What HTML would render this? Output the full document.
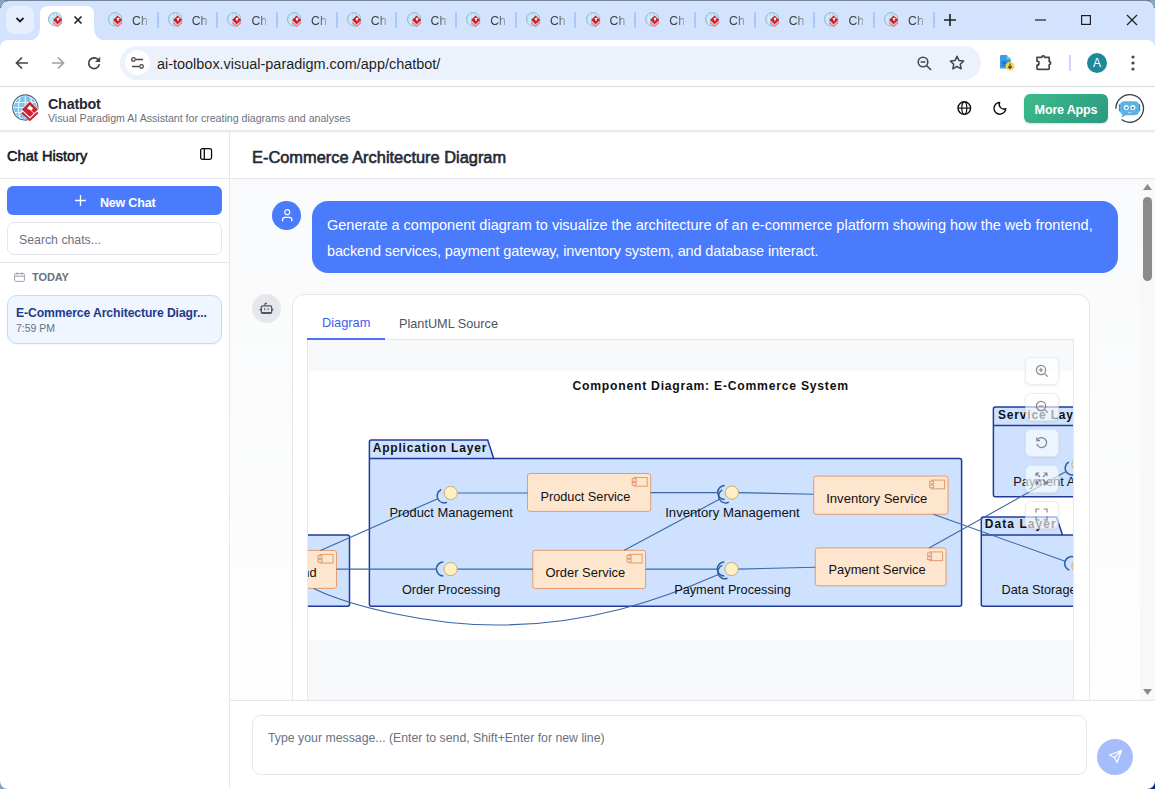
<!DOCTYPE html>
<html><head><meta charset="utf-8">
<style>
*{box-sizing:border-box;margin:0;padding:0}
html,body{width:1155px;height:789px;overflow:hidden;background:#fff;font-family:"Liberation Sans",sans-serif;position:relative}
.a{position:absolute}
svg{overflow:visible}
/* chrome */
#tabstrip{left:0;top:0;width:1155px;height:50px;background:#d3e3fd;border-top:1px solid #74869a}
#toolbar{left:0;top:40px;width:1155px;height:47px;background:#fff;border-bottom:1px solid #dadce0;border-radius:8px 8px 0 0}
.ch{font-size:12.3px;color:#3c4043;top:14px;line-height:14px;width:15px;overflow:hidden;white-space:nowrap;-webkit-mask-image:linear-gradient(90deg,#000 45%,rgba(0,0,0,.35))}
.sep{width:2px;height:16px;top:12px;background:#a8c7fa;border-radius:1px}
#url{left:120px;top:46px;width:861px;height:34px;border-radius:17px;background:#ecf2fb}
/* app */
#hdr{left:0;top:87px;width:1155px;height:44px;background:#fff;box-shadow:0 1px 2px rgba(0,0,0,.10);border-bottom:1px solid #e5e7eb;z-index:2}
#side{left:0;top:131px;width:230px;height:658px;background:#fff;border-right:1px solid #e5e7eb}
#main{left:230px;top:131px;width:925px;height:658px;background:linear-gradient(180deg,#f9fafb 0px,#f9fafb 60px,#fefefe 569px)}
.zb{width:34px;height:28px;border-radius:6px;background:rgba(255,255,255,.62);border:1px solid rgba(0,0,0,.07);box-shadow:0 1px 3px rgba(0,0,0,.08)}
</style></head><body>
<svg width="0" height="0" style="position:absolute">
 <defs>
  <symbol id="fav" viewBox="0 0 28 28">
   <circle cx="13.3" cy="13.5" r="12.4" fill="#b0e0f7" stroke="#9db4c3" stroke-width="1.8"/>
   <path d="M3 9.5h20.6M2.5 14.5h21.6M3.5 19.5h19M13.3 2.5v22M8 3.5Q5 13.5 8 23.5M18.6 3.5Q21.6 13.5 18.6 23.5" stroke="#e8f7fd" stroke-width="1.3" fill="none"/>
   <path d="M17.9 6.6l8.6 8.2-8.6 8.2-8.4-8.2z" fill="#cf1d2a"/>
   <path d="M16 12.2l3.4-2 2.4 2.6-2.2 1.4 1 1.2-2.4 1.6z" fill="#fff"/>
   <path d="M9.5 19.2l8.4 7.6 8.6-7.6" fill="none" stroke="#e8868c" stroke-width="2.6"/>
  </symbol>
  <symbol id="logo" viewBox="0 0 28 28">
   <circle cx="13.3" cy="13.5" r="12.6" fill="#fff" stroke="#48677c" stroke-width="1.1"/>
   <circle cx="13.3" cy="13.5" r="11.4" fill="#7cc4f0"/>
   <path d="M3 8.5h20.6M2 13.5h22.6M3 18.5h20.6M13.3 2.2v22.6M8.2 3Q4.6 13.5 8.2 24M18.4 3Q22 13.5 18.4 24" stroke="#e6f5fd" stroke-width="1.2" fill="none"/>
   <path d="M9.3 15.4L17.9 7L26.6 15.4V18.6L17.9 27L9.3 18.6Z" fill="#fff"/>
   <path d="M17.9 7.6L26 15.4L17.9 23L9.9 15.4Z" fill="#c9262f"/>
   <path d="M17.7 11.3L21.2 14.5L19.1 16.5L15 14.4Z" fill="#fff"/>
   <path d="M18.9 16.3L22.4 19.7" stroke="#fff" stroke-width="0.9"/>
   <path d="M10.1 18.4L17.9 25.9L25.8 18.4" stroke="#c9262f" stroke-width="2.1" fill="none"/>
  </symbol>
 </defs>
</svg>
<!-- ===== CHROME ===== -->
<div id="tabstrip" class="a"></div>
<div class="a" style="left:6px;top:6px;width:28px;height:28px;border-radius:8px;background:#e8effc"></div>
<svg class="a" style="left:15px;top:16px" width="10" height="8"><path d="M1.5 2l3.5 3.5L8.5 2" stroke="#1f1f1f" stroke-width="1.8" fill="none"/></svg>
<!-- active tab -->
<svg class="a" style="left:26px;top:5px" width="82" height="37"><path d="M0 36 Q14 36 14 22 V9 Q14 1 22 1 H60 Q68 1 68 9 V22 Q68 36 82 36 Z" fill="#fff"/></svg>
<svg class="a" style="left:48px;top:12px" width="15" height="15"><use href="#fav"/></svg>
<svg class="a" style="left:74px;top:16px" width="8" height="8"><path d="M.5.5l7 7M7.5.5l-7 7" stroke="#1f1f1f" stroke-width="1.6"/></svg>
<svg class="a" style="left:108.0px;top:12px" width="15" height="15"><use href="#fav"/></svg>
<div class="a ch" style="left:132.0px">Ch</div>
<div class="a sep" style="left:156.5px"></div>
<svg class="a" style="left:167.7px;top:12px" width="15" height="15"><use href="#fav"/></svg>
<div class="a ch" style="left:191.7px">Ch</div>
<div class="a sep" style="left:216.2px"></div>
<svg class="a" style="left:227.4px;top:12px" width="15" height="15"><use href="#fav"/></svg>
<div class="a ch" style="left:251.4px">Ch</div>
<div class="a sep" style="left:275.9px"></div>
<svg class="a" style="left:287.1px;top:12px" width="15" height="15"><use href="#fav"/></svg>
<div class="a ch" style="left:311.1px">Ch</div>
<div class="a sep" style="left:335.6px"></div>
<svg class="a" style="left:346.8px;top:12px" width="15" height="15"><use href="#fav"/></svg>
<div class="a ch" style="left:370.8px">Ch</div>
<div class="a sep" style="left:395.3px"></div>
<svg class="a" style="left:406.5px;top:12px" width="15" height="15"><use href="#fav"/></svg>
<div class="a ch" style="left:430.5px">Ch</div>
<div class="a sep" style="left:455.0px"></div>
<svg class="a" style="left:466.2px;top:12px" width="15" height="15"><use href="#fav"/></svg>
<div class="a ch" style="left:490.2px">Ch</div>
<div class="a sep" style="left:514.7px"></div>
<svg class="a" style="left:525.9px;top:12px" width="15" height="15"><use href="#fav"/></svg>
<div class="a ch" style="left:549.9px">Ch</div>
<div class="a sep" style="left:574.4px"></div>
<svg class="a" style="left:585.6px;top:12px" width="15" height="15"><use href="#fav"/></svg>
<div class="a ch" style="left:609.6px">Ch</div>
<div class="a sep" style="left:634.1px"></div>
<svg class="a" style="left:645.3px;top:12px" width="15" height="15"><use href="#fav"/></svg>
<div class="a ch" style="left:669.3px">Ch</div>
<div class="a sep" style="left:693.8px"></div>
<svg class="a" style="left:705.0px;top:12px" width="15" height="15"><use href="#fav"/></svg>
<div class="a ch" style="left:729.0px">Ch</div>
<div class="a sep" style="left:753.5px"></div>
<svg class="a" style="left:764.7px;top:12px" width="15" height="15"><use href="#fav"/></svg>
<div class="a ch" style="left:788.7px">Ch</div>
<div class="a sep" style="left:813.2px"></div>
<svg class="a" style="left:824.4px;top:12px" width="15" height="15"><use href="#fav"/></svg>
<div class="a ch" style="left:848.4px">Ch</div>
<div class="a sep" style="left:872.9px"></div>
<svg class="a" style="left:884.1px;top:12px" width="15" height="15"><use href="#fav"/></svg>
<div class="a ch" style="left:908.1px">Ch</div>
<div class="a sep" style="left:932.6px"></div>
<svg class="a" style="left:943px;top:13px" width="14" height="14"><path d="M7 1v12M1 7h12" stroke="#1f1f1f" stroke-width="1.6"/></svg>
<svg class="a" style="left:1034.5px;top:19px" width="11" height="2"><path d="M0 1h11" stroke="#1f1f1f" stroke-width="1.2"/></svg>
<svg class="a" style="left:1081px;top:15px" width="10" height="10"><rect x=".6" y=".6" width="8.8" height="8.8" stroke="#1f1f1f" stroke-width="1.2" fill="none"/></svg>
<svg class="a" style="left:1127px;top:15px" width="10" height="10"><path d="M0 0l10 10M10 0L0 10" stroke="#1f1f1f" stroke-width="1.2"/></svg>

<div id="toolbar" class="a"></div>
<svg class="a" style="left:15px;top:56px" width="14" height="14"><path d="M13 7H2M7 1.5L1.5 7 7 12.5" stroke="#474747" stroke-width="1.7" fill="none"/></svg>
<svg class="a" style="left:51px;top:56px" width="14" height="14"><path d="M1 7h11M7 1.5L12.5 7 7 12.5" stroke="#a0a0a0" stroke-width="1.7" fill="none"/></svg>
<svg class="a" style="left:87px;top:56px" width="14" height="14"><path d="M11.6 4.2A5.4 5.4 0 1 0 12.4 8.2" stroke="#474747" stroke-width="1.7" fill="none"/><path d="M13.2 0.8V6H8z" fill="#474747"/></svg>
<div id="url" class="a"></div>
<div class="a" style="left:125px;top:50px;width:25px;height:25px;border-radius:50%;background:#fff"></div>
<svg class="a" style="left:131px;top:57px" width="13" height="12"><circle cx="2.5" cy="2.5" r="1.8" stroke="#474747" stroke-width="1.3" fill="none"/><path d="M5 2.5h7M1 9.5h7" stroke="#474747" stroke-width="1.3"/><circle cx="10.5" cy="9.5" r="1.8" stroke="#474747" stroke-width="1.3" fill="none"/></svg>
<div class="a" style="left:157px;top:56px;font-size:14.45px;color:#1f1f1f;line-height:16px">ai-toolbox.visual-paradigm.com/app/chatbot/</div>
<svg class="a" style="left:917px;top:56px" width="15" height="15"><circle cx="6" cy="6" r="4.8" stroke="#474747" stroke-width="1.6" fill="none"/><path d="M3.6 6h4.8M9.5 9.5l4.5 4.5" stroke="#474747" stroke-width="1.6"/></svg>
<svg class="a" style="left:949px;top:55px" width="16" height="16"><path d="M8 1.3l2 4.3 4.6.5-3.4 3.1 1 4.6L8 11.5l-4.2 2.3 1-4.6L1.4 6.1 6 5.6z" stroke="#474747" stroke-width="1.5" fill="none" stroke-linejoin="round"/></svg>
<svg class="a" style="left:999px;top:54px" width="17" height="18"><path d="M1 2.2Q1 1 2.2 1H7.6L11.8 5.2V13.4Q11.8 14.6 10.6 14.6H2.2Q1 14.6 1 13.4z" fill="#3d9ae8"/><path d="M7.6 1L11.8 5.2H8.6Q7.6 5.2 7.6 4.2z" fill="#5fd4c8"/><path d="M3 7.8h4.5M3 9.6h4.5M3 11.4h3" stroke="#245a9e" stroke-width=".9"/><circle cx="11" cy="12.3" r="4.3" fill="#fbd640"/><path d="M11 9.6v4.6M9.2 12.5l1.8 1.8 1.8-1.8" stroke="#2a3550" stroke-width="1.1" fill="none"/></svg>
<svg class="a" style="left:1035px;top:53px" width="18" height="18"><path d="M2 4.3H6.8A1.4 1.4 0 0 1 9.6 4.3H14.2V8.6A1.5 1.5 0 0 1 14.2 11.6V15.6Q14.2 16.4 13.4 16.4H2.8Q2 16.4 2 15.6V12.2A2 2 0 0 0 2 8.2Z" stroke="#474747" stroke-width="1.7" fill="none" stroke-linejoin="round"/></svg>
<div class="a" style="left:1069px;top:55px;width:2px;height:16px;background:#c7d7f7"></div>
<div class="a" style="left:1087px;top:53px;width:20px;height:20px;border-radius:50%;background:#1d8a99;color:#fff;font-size:12px;line-height:20px;text-align:center">A</div>
<svg class="a" style="left:1131px;top:55px" width="4" height="16"><circle cx="2" cy="2" r="1.6" fill="#474747"/><circle cx="2" cy="8" r="1.6" fill="#474747"/><circle cx="2" cy="14" r="1.6" fill="#474747"/></svg>

<!-- ===== APP ===== -->
<div id="hdr" class="a"></div>
<svg class="a" style="left:12px;top:94px;z-index:3" width="28" height="28"><use href="#logo"/></svg>
<div class="a" style="left:48px;top:96px;font-size:14.3px;font-weight:bold;color:#1f2937;line-height:16px;z-index:3;letter-spacing:-0.2px">Chatbot</div>
<div class="a" style="left:48px;top:112px;font-size:10.6px;color:#6b7280;line-height:12px;z-index:3">Visual Paradigm AI Assistant for creating diagrams and analyses</div>
<svg class="a" style="left:957px;top:101px;z-index:3" width="15" height="15"><circle cx="7.3" cy="7.1" r="6.3" stroke="#111" stroke-width="1.4" fill="none"/><ellipse cx="7.3" cy="7.1" rx="2.5" ry="6.3" stroke="#111" stroke-width="1.2" fill="none"/><path d="M1 7.1h12.6" stroke="#111" stroke-width="1.2"/></svg>
<svg class="a" style="left:993px;top:101px;z-index:3" width="15" height="15"><path d="M6.6 1.4A5.9 5.9 0 1 0 12.8 7.6A4.7 4.7 0 0 1 6.6 1.4Z" stroke="#111" stroke-width="1.4" fill="none" stroke-linejoin="round"/></svg>
<div class="a" style="left:1024px;top:94px;width:84px;height:29px;border-radius:6px;background:linear-gradient(135deg,#3dbb8c,#2a9a80);color:#fff;font-size:12.6px;font-weight:bold;line-height:33px;text-align:center;z-index:3;box-shadow:0 1px 2px rgba(0,0,0,.15);letter-spacing:-0.2px">More Apps</div>
<svg class="a" style="left:1115px;top:94px;z-index:3" width="29" height="29">
 <path d="M0.9 14.8A13.8 13.8 0 1 1 6.5 25.6" stroke="#39414b" stroke-width="1.3" fill="none"/>
 <rect x="3.9" y="10" width="2.4" height="7.5" rx="1.2" fill="#3d8ccc"/><rect x="22.8" y="10" width="2.4" height="7.5" rx="1.2" fill="#3d8ccc"/>
 <path d="M5 11.5Q5 7.2 9.5 7.2h10Q24 7.2 24 11.5v5.3q0 4.5-4.5 4.5h-8.5l-4.8 2.3 1.2-3.2Q5 19.3 5 16.8z" fill="#5db3e6"/>
 <circle cx="11.3" cy="13.6" r="2.5" fill="#f2f9ff"/><circle cx="17.9" cy="13.6" r="2.5" fill="#f2f9ff"/>
 <circle cx="11.4" cy="13.8" r="1.1" fill="#5b6570"/><circle cx="17.8" cy="13.8" r="1.1" fill="#5b6570"/>
 <path d="M13.3 18.4q1.3.8 2.6 0" stroke="#cfe9f8" stroke-width="1" fill="none"/>
</svg>
<div id="side" class="a"></div>
<div class="a" style="left:7px;top:148px;font-size:14.6px;color:#111827;line-height:16px;-webkit-text-stroke:0.55px #111827">Chat History</div>
<svg class="a" style="left:200px;top:148px" width="13" height="13"><rect x=".65" y=".65" width="10.9" height="10.7" rx="1.8" stroke="#0a0a0a" stroke-width="1.3" fill="none"/><path d="M4.3 .6v10.8" stroke="#0a0a0a" stroke-width="1.3"/></svg>
<div class="a" style="left:0;top:178px;width:229px;height:1px;background:#e5e7eb"></div>
<div class="a" style="left:7px;top:186px;width:215px;height:29px;border-radius:6px;background:#4a7bfc"></div>
<svg class="a" style="left:75px;top:195px" width="11" height="11"><path d="M5.5 0v11M0 5.5h11" stroke="#fff" stroke-width="1.3"/></svg>
<div class="a" style="left:100px;top:195.5px;font-size:12.5px;font-weight:bold;color:#fff;line-height:15px;letter-spacing:-0.2px">New Chat</div>
<div class="a" style="left:7px;top:222px;width:215px;height:33px;border-radius:7px;border:1px solid #e5e7eb;background:#fff"></div>
<div class="a" style="left:19px;top:233px;font-size:12.3px;color:#6b7280;line-height:14px">Search chats...</div>
<div class="a" style="left:0;top:262px;width:229px;height:1px;background:#e5e7eb"></div>
<svg class="a" style="left:14px;top:272px" width="11" height="10"><rect x=".6" y="1.6" width="9.8" height="7.8" rx="1" stroke="#9ca3af" stroke-width="1" fill="none"/><path d="M.6 4.2h9.8M3 .3v2.5M8 .3v2.5" stroke="#9ca3af" stroke-width="1"/></svg>
<div class="a" style="left:32px;top:271px;font-size:11px;font-weight:bold;color:#6b7280;line-height:12px;letter-spacing:-0.1px">TODAY</div>
<div class="a" style="left:7px;top:295px;width:215px;height:49px;border-radius:10px;border:1px solid #c2dafe;background:#eff6ff;box-shadow:0 1px 2px rgba(0,0,0,.05)"></div>
<div class="a" style="left:16px;top:306px;font-size:12.2px;font-weight:bold;color:#1e3a8a;line-height:14px;letter-spacing:-0.1px">E-Commerce Architecture Diagr...</div>
<div class="a" style="left:16px;top:322px;font-size:10.5px;color:#6b7280;line-height:12px">7:59 PM</div>
<div id="main" class="a"></div>
<div class="a" style="left:230px;top:131px;width:925px;height:48px;background:#fff;border-bottom:1px solid #e5e7eb"></div>
<div class="a" style="left:252px;top:147.5px;font-size:16.4px;color:#1f2937;line-height:18px;-webkit-text-stroke:0.6px #1f2937">E-Commerce Architecture Diagram</div>
<!-- user msg -->
<div class="a" style="left:272px;top:201px;width:29px;height:28.5px;border-radius:50%;background:#4a7bfc"></div>
<svg class="a" style="left:280px;top:208px" width="14" height="14"><circle cx="7.2" cy="4.2" r="2.5" stroke="#fff" stroke-width="1.2" fill="none"/><path d="M2.6 13.2V11.6Q2.6 9.3 4.9 9.3H9.5Q11.8 9.3 11.8 11.6V13.2" stroke="#fff" stroke-width="1.3" fill="none"/></svg>
<div class="a" style="left:312px;top:201px;width:806px;height:72px;border-radius:16px;background:#4a7bfc"></div>
<div class="a" style="left:327px;top:211.5px;white-space:nowrap;font-size:14.5px;color:#fff;line-height:26px">Generate a component diagram to visualize the architecture of an e-commerce platform showing how the web frontend,</div>
<div class="a" style="left:327px;top:237.5px;white-space:nowrap;font-size:14.5px;color:#fff;line-height:26px;letter-spacing:-0.13px">backend services, payment gateway, inventory system, and database interact.</div>
<!-- bot -->
<div class="a" style="left:252px;top:294px;width:29px;height:29px;border-radius:50%;background:#e5e7eb"></div>
<svg class="a" style="left:259px;top:301px" width="15" height="15"><rect x="2.3" y="4.8" width="10.4" height="7.6" rx="1.6" stroke="#4b5563" stroke-width="1.3" fill="none"/><path d="M2.6 11.6h9.8" stroke="#4b5563" stroke-width="1.2"/><path d="M6 4.6V2.9Q6 2.3 6.6 2.3H7.9" stroke="#4b5563" stroke-width="1.2" fill="none"/><path d="M5.6 6.9v2.4M9 6.9v2.4" stroke="#6b7280" stroke-width="1.1"/><path d="M0.6 8.6h1.6M12.8 8.6h1.6" stroke="#4b5563" stroke-width="1.1"/></svg>
<div class="a" style="left:292px;top:294px;width:798px;height:520px;border-radius:12px;border:1px solid #e5e7eb;background:#fff"></div>
<div class="a" style="left:322px;top:315px;font-size:12.8px;color:#4060f2;line-height:15px">Diagram</div>
<div class="a" style="left:399px;top:316.5px;font-size:12.7px;color:#4b5563;line-height:15px">PlantUML Source</div>
<div class="a" style="left:307px;top:339px;width:767px;height:1px;background:#e5e7eb"></div>
<div class="a" style="left:307px;top:337.5px;width:78px;height:2px;background:#4a72f5"></div>
<div id="diag" class="a" style="left:307px;top:340px;width:767px;height:400px;border-left:1px solid #e5e7eb;border-right:1px solid #e5e7eb;background:#f8f9fb;overflow:hidden">
 <div class="a" style="left:0;top:31px;width:767px;height:269px;background:#fff"></div>
<svg class="a" style="left:0;top:0;overflow:hidden" width="765" height="360" viewBox="308 340 765 360" font-family="Liberation Sans, sans-serif">
<text x="572.5" y="390.0" font-size="12.2" font-weight="bold" fill="#111" textLength="275.5" lengthAdjust="spacing">Component Diagram: E-Commerce System</text>
<path d="M250 535 H347.5 Q349.5 535 349.5 537 V604.3 Q349.5 606.3 347.5 606.3 H250 Z" fill="#cee2ff" stroke="#23399a" stroke-width="1.5"/>
<path d="M369.4 458.4 V442 Q369.4 440 371.4 440 H487.7 L493.7 458.4 H959.6 Q961.6 458.4 961.6 460.4 V604.2 Q961.6 606.2 959.6 606.2 H371.4 Q369.4 606.2 369.4 604.2 Z" fill="#cee2ff" stroke="#23399a" stroke-width="1.5"/>
<path d="M369.4 458.4 H493.7" stroke="#23399a" stroke-width="1.5"/>
<text x="372.7" y="451.9" font-size="12" font-weight="bold" fill="#111" textLength="113.6" lengthAdjust="spacing">Application Layer</text>
<path d="M993.4 425.6 V409 Q993.4 407 995.4 407 H1114 L1120 425.6 H1198 Q1200 425.6 1200 427.6 V494.8 Q1200 496.8 1198 496.8 H995.4 Q993.4 496.8 993.4 494.8 Z" fill="#cee2ff" stroke="#23399a" stroke-width="1.5"/>
<path d="M993.4 425.6 H1120" stroke="#23399a" stroke-width="1.5"/>
<text x="998" y="419.2" font-size="12" font-weight="bold" fill="#111" textLength="88" lengthAdjust="spacing">Service Layer</text>
<path d="M981.3 535 V519 Q981.3 517 983.3 517 H1056.5 L1062.5 535 H1198 Q1200 535 1200 537 V604.2 Q1200 606.2 1198 606.2 H983.3 Q981.3 606.2 981.3 604.2 Z" fill="#cee2ff" stroke="#23399a" stroke-width="1.5"/>
<path d="M981.3 535 H1062.5" stroke="#23399a" stroke-width="1.5"/>
<text x="984.7" y="528.4" font-size="12" font-weight="bold" fill="#111" textLength="71" lengthAdjust="spacing">Data Layer</text>
<rect x="260" y="550.4" width="76.5" height="38.0" rx="2.5" fill="#fde5ce" stroke="#e09d72" stroke-width="1"/>
<rect x="320.0" y="554.4" width="13" height="8.7" fill="#fde5ce" stroke="#e09d72" stroke-width="1"/>
<rect x="318.0" y="555.6" width="4" height="2.6" fill="#fde5ce" stroke="#e09d72" stroke-width="1"/>
<rect x="318.0" y="559.4" width="4" height="2.6" fill="#fde5ce" stroke="#e09d72" stroke-width="1"/>
<text x="316.5" y="576.6" font-size="12.8" font-weight="normal" fill="#111" text-anchor="end">Web Frontend</text>
<rect x="527.5" y="473.5" width="123.20000000000005" height="37.89999999999998" rx="2.5" fill="#fde5ce" stroke="#e09d72" stroke-width="1"/>
<rect x="634.2" y="477.5" width="13" height="8.7" fill="#fde5ce" stroke="#e09d72" stroke-width="1"/>
<rect x="632.2" y="478.7" width="4" height="2.6" fill="#fde5ce" stroke="#e09d72" stroke-width="1"/>
<rect x="632.2" y="482.5" width="4" height="2.6" fill="#fde5ce" stroke="#e09d72" stroke-width="1"/>
<text x="540.4" y="501" font-size="12.8" font-weight="normal" fill="#111" textLength="89.9" lengthAdjust="spacingAndGlyphs">Product Service</text>
<rect x="532.8" y="550.3" width="112.80000000000007" height="38.200000000000045" rx="2.5" fill="#fde5ce" stroke="#e09d72" stroke-width="1"/>
<rect x="629.1" y="554.3" width="13" height="8.7" fill="#fde5ce" stroke="#e09d72" stroke-width="1"/>
<rect x="627.1" y="555.5" width="4" height="2.6" fill="#fde5ce" stroke="#e09d72" stroke-width="1"/>
<rect x="627.1" y="559.3" width="4" height="2.6" fill="#fde5ce" stroke="#e09d72" stroke-width="1"/>
<text x="545.5" y="576.8" font-size="12.8" font-weight="normal" fill="#111" textLength="79.7" lengthAdjust="spacingAndGlyphs">Order Service</text>
<rect x="813.7" y="476.1" width="134.39999999999998" height="38.19999999999993" rx="2.5" fill="#fde5ce" stroke="#e09d72" stroke-width="1"/>
<rect x="931.6" y="480.1" width="13" height="8.7" fill="#fde5ce" stroke="#e09d72" stroke-width="1"/>
<rect x="929.6" y="481.3" width="4" height="2.6" fill="#fde5ce" stroke="#e09d72" stroke-width="1"/>
<rect x="929.6" y="485.1" width="4" height="2.6" fill="#fde5ce" stroke="#e09d72" stroke-width="1"/>
<text x="826.2" y="502.5" font-size="12.8" font-weight="normal" fill="#111" textLength="101.1" lengthAdjust="spacingAndGlyphs">Inventory Service</text>
<rect x="815.3" y="547.9" width="130.80000000000007" height="37.89999999999998" rx="2.5" fill="#fde5ce" stroke="#e09d72" stroke-width="1"/>
<rect x="929.6" y="551.9" width="13" height="8.7" fill="#fde5ce" stroke="#e09d72" stroke-width="1"/>
<rect x="927.6" y="553.1" width="4" height="2.6" fill="#fde5ce" stroke="#e09d72" stroke-width="1"/>
<rect x="927.6" y="556.9" width="4" height="2.6" fill="#fde5ce" stroke="#e09d72" stroke-width="1"/>
<text x="828.5" y="574.3" font-size="12.8" font-weight="normal" fill="#111" textLength="97.2" lengthAdjust="spacingAndGlyphs">Payment Service</text>
<path d="M457.30 493.00 L527.50 493.00" fill="none" stroke="#3b67a6" stroke-width="1.1"/>
<path d="M457.20 569.10 L532.80 569.10" fill="none" stroke="#3b67a6" stroke-width="1.1"/>
<path d="M738.50 492.60 L813.70 494.20" fill="none" stroke="#3b67a6" stroke-width="1.1"/>
<path d="M738.10 569.10 L815.30 567.20" fill="none" stroke="#3b67a6" stroke-width="1.1"/>
<path d="M441.29 489.50 A7.0 7.0 0 0 0 446.94 502.31" fill="none" stroke="#2f5e9c" stroke-width="1.5"/>
<path d="M437.71 498.73 L320.50 550.40" fill="none" stroke="#3b67a6" stroke-width="1.1"/>
<path d="M443.40 562.10 A7.0 7.0 0 0 0 443.40 576.10" fill="none" stroke="#2f5e9c" stroke-width="1.5"/>
<path d="M436.40 569.10 L336.50 569.10" fill="none" stroke="#3b67a6" stroke-width="1.1"/>
<path d="M724.70 485.60 A7.0 7.0 0 0 0 724.70 499.60" fill="none" stroke="#2f5e9c" stroke-width="1.5"/>
<path d="M717.70 492.60 L650.70 492.60" fill="none" stroke="#3b67a6" stroke-width="1.1"/>
<path d="M722.25 489.83 A7.0 7.0 0 0 0 728.86 502.17" fill="none" stroke="#2f5e9c" stroke-width="1.5"/>
<path d="M719.39 499.31 L624.30 550.30" fill="none" stroke="#3b67a6" stroke-width="1.1"/>
<path d="M724.30 562.10 A7.0 7.0 0 0 0 724.30 576.10" fill="none" stroke="#2f5e9c" stroke-width="1.5"/>
<path d="M717.30 569.10 L645.60 569.10" fill="none" stroke="#3b67a6" stroke-width="1.1"/>
<path d="M722.19 565.33 A7.0 7.0 0 0 0 727.47 578.30" fill="none" stroke="#2f5e9c" stroke-width="1.5"/>
<path d="M313.7 588.4 C350 606 430 626 503 625 C590 624 660 600 718.35 574.46" fill="none" stroke="#3b67a6" stroke-width="1.1"/>
<path d="M1068.80 461.99 A7.0 7.0 0 0 0 1075.62 474.22" fill="none" stroke="#2f5e9c" stroke-width="1.5"/>
<path d="M1066.10 471.52 L929.00 548.00" fill="none" stroke="#3b67a6" stroke-width="1.1"/>
<path d="M1074.07 556.99 A7.0 7.0 0 0 0 1069.37 570.18" fill="none" stroke="#2f5e9c" stroke-width="1.5"/>
<path d="M1065.12 561.24 L933.30 514.30" fill="none" stroke="#3b67a6" stroke-width="1.1"/>
<circle cx="450.7" cy="493.0" r="6.6" fill="#fdf1c4" stroke="#c9ad77" stroke-width="1"/>
<circle cx="450.6" cy="569.1" r="6.6" fill="#fdf1c4" stroke="#c9ad77" stroke-width="1"/>
<circle cx="731.9" cy="492.6" r="6.6" fill="#fdf1c4" stroke="#c9ad77" stroke-width="1"/>
<circle cx="731.5" cy="569.1" r="6.6" fill="#fdf1c4" stroke="#c9ad77" stroke-width="1"/>
<circle cx="1078.5" cy="464.6" r="6.6" fill="#fdf1c4" stroke="#c9ad77" stroke-width="1"/>
<circle cx="1078.5" cy="566.0" r="6.6" fill="#fdf1c4" stroke="#c9ad77" stroke-width="1"/>
<text x="389.4" y="516.9" font-size="12.8" font-weight="normal" fill="#111" textLength="123.4" lengthAdjust="spacingAndGlyphs">Product Management</text>
<text x="401.9" y="594.3" font-size="12.8" font-weight="normal" fill="#111" textLength="98.4" lengthAdjust="spacingAndGlyphs">Order Processing</text>
<text x="665.2" y="517.1" font-size="12.8" font-weight="normal" fill="#111" textLength="134.5" lengthAdjust="spacingAndGlyphs">Inventory Management</text>
<text x="674.2" y="594.3" font-size="12.8" font-weight="normal" fill="#111" textLength="116.6" lengthAdjust="spacingAndGlyphs">Payment Processing</text>
<text x="1013.3" y="485.6" font-size="12.8" font-weight="normal" fill="#111">Payment API</text>
<text x="1001.6" y="594.2" font-size="12.8" font-weight="normal" fill="#111" textLength="75" lengthAdjust="spacingAndGlyphs">Data Storage</text>
</svg>
</div>
<div class="a zb" style="left:1024.5px;top:356.5px"></div><svg class="a" style="left:1034.5px;top:364.0px;opacity:.7" width="13" height="13"><circle cx="6" cy="6" r="4.6" stroke="#555" stroke-width="1.2" fill="none"/><path d="M9.4 9.4l3.3 3.3M3.8 6h4.4M6 3.8v4.4" stroke="#555" stroke-width="1.2"/></svg>
<div class="a zb" style="left:1024.5px;top:392.5px"></div><svg class="a" style="left:1034.5px;top:400.0px;opacity:.7" width="13" height="13"><circle cx="6" cy="6" r="4.6" stroke="#555" stroke-width="1.2" fill="none"/><path d="M9.4 9.4l3.3 3.3M3.8 6h4.4" stroke="#555" stroke-width="1.2"/></svg>
<div class="a zb" style="left:1024.5px;top:428.7px"></div><svg class="a" style="left:1034.5px;top:436.2px;opacity:.7" width="13" height="13"><path d="M2.2 4.2A5 5 0 1 1 1.8 8" stroke="#555" stroke-width="1.2" fill="none"/><path d="M1.8 1.5v3.2H5" stroke="#555" stroke-width="1.2" fill="none"/></svg>
<div class="a zb" style="left:1024.5px;top:464.9px"></div><svg class="a" style="left:1034.5px;top:472.4px;opacity:.7" width="13" height="13"><path d="M1 1l4 4M1 1h3.2M1 1v3.2M12 1l-4 4M12 1H8.8M12 1v3.2M1 12l4-4M1 12h3.2M1 12V8.8M12 12L8 8M12 12H8.8M12 12V8.8" stroke="#555" stroke-width="1.1" fill="none"/></svg>
<div class="a zb" style="left:1024.5px;top:500.6px"></div><svg class="a" style="left:1034.5px;top:508.1px;opacity:.7" width="13" height="13"><path d="M1 4.5V1h3.5M8.5 1H12v3.5M12 8.5V12H8.5M4.5 12H1V8.5" stroke="#555" stroke-width="1.2" fill="none"/></svg>
<!-- scrollbar -->
<div class="a" style="left:1140px;top:179px;width:15px;height:521px;background:#f8f8f9"></div>
<svg class="a" style="left:1142px;top:183px" width="11" height="8"><path d="M5.5 1L10 7H1z" fill="#8a8a8a"/></svg>
<div class="a" style="left:1143px;top:197px;width:9px;height:84px;border-radius:4.5px;background:#8a8a8a"></div>
<svg class="a" style="left:1142px;top:688px" width="11" height="8"><path d="M5.5 7L10 1H1z" fill="#8a8a8a"/></svg>
<!-- input -->
<div class="a" style="left:230px;top:700px;width:925px;height:89px;background:#fff;border-top:1px solid #e5e7eb"></div>
<div class="a" style="left:252px;top:715px;width:835px;height:60px;border-radius:9px;border:1px solid #e5e7eb;background:#fff"></div>
<div class="a" style="left:268px;top:731px;font-size:12.3px;color:#6b7280;line-height:14px">Type your message... (Enter to send, Shift+Enter for new line)</div>
<div class="a" style="left:1097px;top:739px;width:36px;height:36px;border-radius:50%;background:#a5bdfb"></div>
<svg class="a" style="left:1108px;top:749px" width="15" height="15"><path d="M13.5 1.5L1.5 6l5 2.5 2.5 5z M13.5 1.5L6.5 8.5" stroke="#fff" stroke-width="1.2" fill="none" stroke-linejoin="round"/></svg>
<svg class="a" style="left:0;top:0;z-index:20" width="8" height="8"><path d="M0 0H8A8 8 0 0 0 0 8z" fill="#7ea6c0"/><path d="M8 0.6A7.4 7.4 0 0 0 0.6 8" stroke="#5d7483" stroke-width="1" fill="none"/></svg>
<svg class="a" style="left:1147px;top:0;z-index:20" width="8" height="8"><path d="M8 0H0A8 8 0 0 1 8 8z" fill="#7ea6c0"/><path d="M0 0.6A7.4 7.4 0 0 1 7.4 8" stroke="#5d7483" stroke-width="1" fill="none"/></svg>
<svg class="a" style="left:0;top:781px;z-index:20" width="8" height="8"><path d="M0 8H8A8 8 0 0 1 0 0z" fill="#8ca0b4"/></svg>
<svg class="a" style="left:1147px;top:781px;z-index:20" width="8" height="8"><path d="M8 8H0A8 8 0 0 0 8 0z" fill="#0a2e8a"/></svg>
</body></html>
